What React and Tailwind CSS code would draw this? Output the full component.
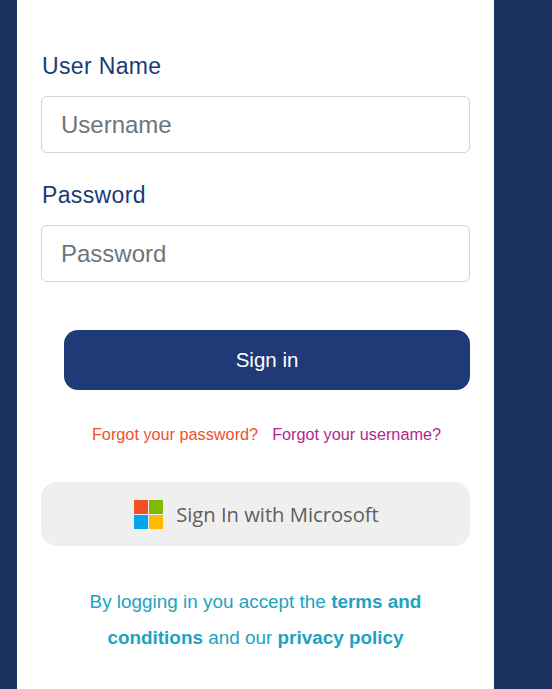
export default function App() {
  return (
    <div className="h-[689px] w-[552px] overflow-hidden bg-[#1b3360] font-['Liberation_Sans',sans-serif]">
      <div className="ml-[17px] flex h-full w-[477px] flex-col bg-white pl-6 pr-6 pt-[51px]">
        <label className="h-[30px] pl-px text-[23px] leading-[30px] tracking-[0.35px] text-[#1c3a78]">User Name</label>
        <input
          placeholder="Username"
          className="mt-[15px] h-[57px] w-[429px] rounded-md border border-[#ced4da] bg-white px-[19px] text-[24px] text-[#212529] outline-none placeholder:text-[#6c757d]"
        />
        <label className="mt-[27px] h-[30px] pl-px text-[23px] leading-[30px] tracking-[0.35px] text-[#1c3a78]">Password</label>
        <input
          placeholder="Password"
          className="mt-[15px] h-[57px] w-[429px] rounded-md border border-[#ced4da] bg-white px-[19px] text-[24px] text-[#212529] outline-none placeholder:text-[#6c757d]"
        />
        <button className="mt-[48px] ml-[23px] h-[60px] w-[406px] rounded-[14px] bg-[#203a77] text-[20.5px] text-white">
          Sign in
        </button>
        <div className="mt-[34px] flex h-5 items-center justify-center gap-[14px] pl-[22px] text-[16.25px] leading-5">
          <a className="text-[#f0502d]">Forgot your password?</a>
          <a className="text-[#b0288c]">Forgot your username?</a>
        </div>
        <button className="mt-[38px] flex h-[64px] w-[429px] items-center justify-center gap-[13px] rounded-[16px] bg-[#efefef] pl-[2px] font-['Open_Sans',sans-serif] text-[20.2px] font-medium text-[#5e5e5e]">
          <svg className="mt-px" width="29" height="29" viewBox="0 0 29 29">
            <rect x="0" y="0" width="14" height="14" fill="#f25022" />
            <rect x="15" y="0" width="14" height="14" fill="#7fba00" />
            <rect x="0" y="15" width="14" height="14" fill="#00a4ef" />
            <rect x="15" y="15" width="14" height="14" fill="#ffb900" />
          </svg>
          <span>Sign In with Microsoft</span>
        </button>
        <p className="mt-[38px] px-[40px] text-center text-[18.9px] leading-[36px] text-[#1ea2bf]">
          By logging in you accept the <b className="font-bold">terms and conditions</b> and our{" "}
          <b className="font-bold">privacy policy</b>
        </p>
      </div>
    </div>
  );
}
